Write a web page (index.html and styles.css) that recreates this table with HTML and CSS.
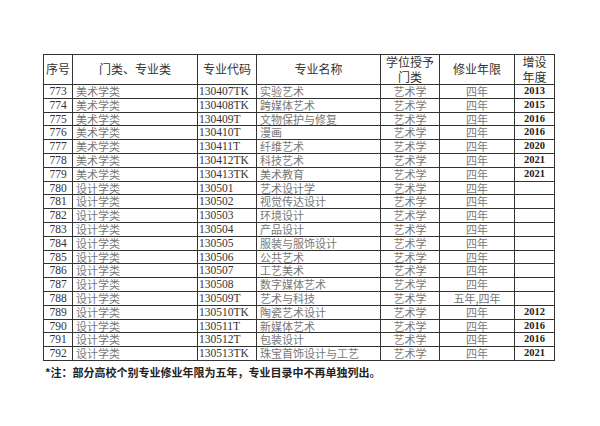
FILE: index.html
```html
<!DOCTYPE html>
<html lang="zh">
<head>
<meta charset="utf-8">
<link rel="stylesheet" href="styles.css">
</head>
<body>
<div class="page">
<table class="majors">
<colgroup>
<col class="c1"><col class="c2"><col class="c3"><col class="c4"><col class="c5"><col class="c6"><col class="c7">
</colgroup>
<thead>
<tr>
<th>序号</th><th>门类、专业类</th><th>专业代码</th><th>专业名称</th><th>学位授予<br>门类</th><th>修业年限</th><th>增设<br>年度</th>
</tr>
</thead>
<tbody>
<tr><td class="n">773</td><td class="t">美术学类</td><td class="code">130407TK</td><td class="t">实验艺术</td><td class="t ctr">艺术学</td><td class="t ctr">四年</td><td class="y">2013</td></tr>
<tr><td class="n">774</td><td class="t">美术学类</td><td class="code">130408TK</td><td class="t">跨媒体艺术</td><td class="t ctr">艺术学</td><td class="t ctr">四年</td><td class="y">2015</td></tr>
<tr><td class="n">775</td><td class="t">美术学类</td><td class="code">130409T</td><td class="t">文物保护与修复</td><td class="t ctr">艺术学</td><td class="t ctr">四年</td><td class="y">2016</td></tr>
<tr><td class="n">776</td><td class="t">美术学类</td><td class="code">130410T</td><td class="t">漫画</td><td class="t ctr">艺术学</td><td class="t ctr">四年</td><td class="y">2016</td></tr>
<tr><td class="n">777</td><td class="t">美术学类</td><td class="code">130411T</td><td class="t">纤维艺术</td><td class="t ctr">艺术学</td><td class="t ctr">四年</td><td class="y">2020</td></tr>
<tr><td class="n">778</td><td class="t">美术学类</td><td class="code">130412TK</td><td class="t">科技艺术</td><td class="t ctr">艺术学</td><td class="t ctr">四年</td><td class="y">2021</td></tr>
<tr><td class="n">779</td><td class="t">美术学类</td><td class="code">130413TK</td><td class="t">美术教育</td><td class="t ctr">艺术学</td><td class="t ctr">四年</td><td class="y">2021</td></tr>
<tr><td class="n">780</td><td class="t">设计学类</td><td class="code">130501</td><td class="t">艺术设计学</td><td class="t ctr">艺术学</td><td class="t ctr">四年</td><td class="y"></td></tr>
<tr><td class="n">781</td><td class="t">设计学类</td><td class="code">130502</td><td class="t">视觉传达设计</td><td class="t ctr">艺术学</td><td class="t ctr">四年</td><td class="y"></td></tr>
<tr><td class="n">782</td><td class="t">设计学类</td><td class="code">130503</td><td class="t">环境设计</td><td class="t ctr">艺术学</td><td class="t ctr">四年</td><td class="y"></td></tr>
<tr><td class="n">783</td><td class="t">设计学类</td><td class="code">130504</td><td class="t">产品设计</td><td class="t ctr">艺术学</td><td class="t ctr">四年</td><td class="y"></td></tr>
<tr><td class="n">784</td><td class="t">设计学类</td><td class="code">130505</td><td class="t">服装与服饰设计</td><td class="t ctr">艺术学</td><td class="t ctr">四年</td><td class="y"></td></tr>
<tr><td class="n">785</td><td class="t">设计学类</td><td class="code">130506</td><td class="t">公共艺术</td><td class="t ctr">艺术学</td><td class="t ctr">四年</td><td class="y"></td></tr>
<tr><td class="n">786</td><td class="t">设计学类</td><td class="code">130507</td><td class="t">工艺美术</td><td class="t ctr">艺术学</td><td class="t ctr">四年</td><td class="y"></td></tr>
<tr><td class="n">787</td><td class="t">设计学类</td><td class="code">130508</td><td class="t">数字媒体艺术</td><td class="t ctr">艺术学</td><td class="t ctr">四年</td><td class="y"></td></tr>
<tr><td class="n">788</td><td class="t">设计学类</td><td class="code">130509T</td><td class="t">艺术与科技</td><td class="t ctr">艺术学</td><td class="t ctr">五年,四年</td><td class="y"></td></tr>
<tr><td class="n">789</td><td class="t">设计学类</td><td class="code">130510TK</td><td class="t">陶瓷艺术设计</td><td class="t ctr">艺术学</td><td class="t ctr">四年</td><td class="y">2012</td></tr>
<tr><td class="n">790</td><td class="t">设计学类</td><td class="code">130511T</td><td class="t">新媒体艺术</td><td class="t ctr">艺术学</td><td class="t ctr">四年</td><td class="y">2016</td></tr>
<tr><td class="n">791</td><td class="t">设计学类</td><td class="code">130512T</td><td class="t">包装设计</td><td class="t ctr">艺术学</td><td class="t ctr">四年</td><td class="y">2016</td></tr>
<tr><td class="n">792</td><td class="t">设计学类</td><td class="code">130513TK</td><td class="t">珠宝首饰设计与工艺</td><td class="t ctr">艺术学</td><td class="t ctr">四年</td><td class="y">2021</td></tr>
</tbody>
</table>
<p class="note">*注：部分高校个别专业修业年限为五年，专业目录中不再单独列出。</p>
</div>
</body>
</html>
```

FILE: styles.css
```css
html, body {
  margin: 0;
  padding: 0;
  background: #ffffff;
}

.page {
  padding: 54px 0 0 43px;
}

.majors {
  border-collapse: collapse;
  table-layout: fixed;
  width: 511px;
  border: 1.5px solid #222;
}

.c1 { width: 29px; }
.c2 { width: 125px; }
.c3 { width: 59px; }
.c4 { width: 124px; }
.c5 { width: 59px; }
.c6 { width: 75px; }
.c7 { width: 40px; }

.majors th {
  height: 29px;
  padding: 0;
  border: 1px solid #333;
  font-family: "Noto Sans CJK SC", "Noto Sans", sans-serif;
  font-weight: normal;
  font-size: 12px;
  line-height: 14.5px;
  color: #333;
  text-align: center;
  vertical-align: middle;
}

.majors td {
  height: 12.8px;
  padding: 0;
  border: 1px solid #333;
  font-size: 11.5px;
  line-height: 12.8px;
  white-space: nowrap;
  overflow: hidden;
  vertical-align: middle;
}

.majors td.n {
  font-family: "Liberation Serif", serif;
  color: #333;
  text-align: center;
  font-size: 11.5px;
}

.majors td.t {
  font-family: "Noto Sans CJK SC", sans-serif;
  color: #777;
  font-size: 11px;
  padding-left: 3px;
  text-align: left;
}

.majors td.ctr {
  text-align: center;
  padding-left: 0;
}

.majors td.code {
  font-family: "Liberation Serif", serif;
  color: #333;
  padding-left: 1px;
  text-align: left;
  font-size: 11.5px;
}

.majors td.y {
  font-family: "Liberation Serif", serif;
  font-weight: bold;
  font-size: 10.5px;
  color: #222;
  text-align: center;
}

.note {
  margin: 4px 0 0 2px;
  font-family: "Noto Sans CJK SC", sans-serif;
  font-weight: bold;
  font-size: 11px;
  line-height: 14px;
  color: #222;
}
```
